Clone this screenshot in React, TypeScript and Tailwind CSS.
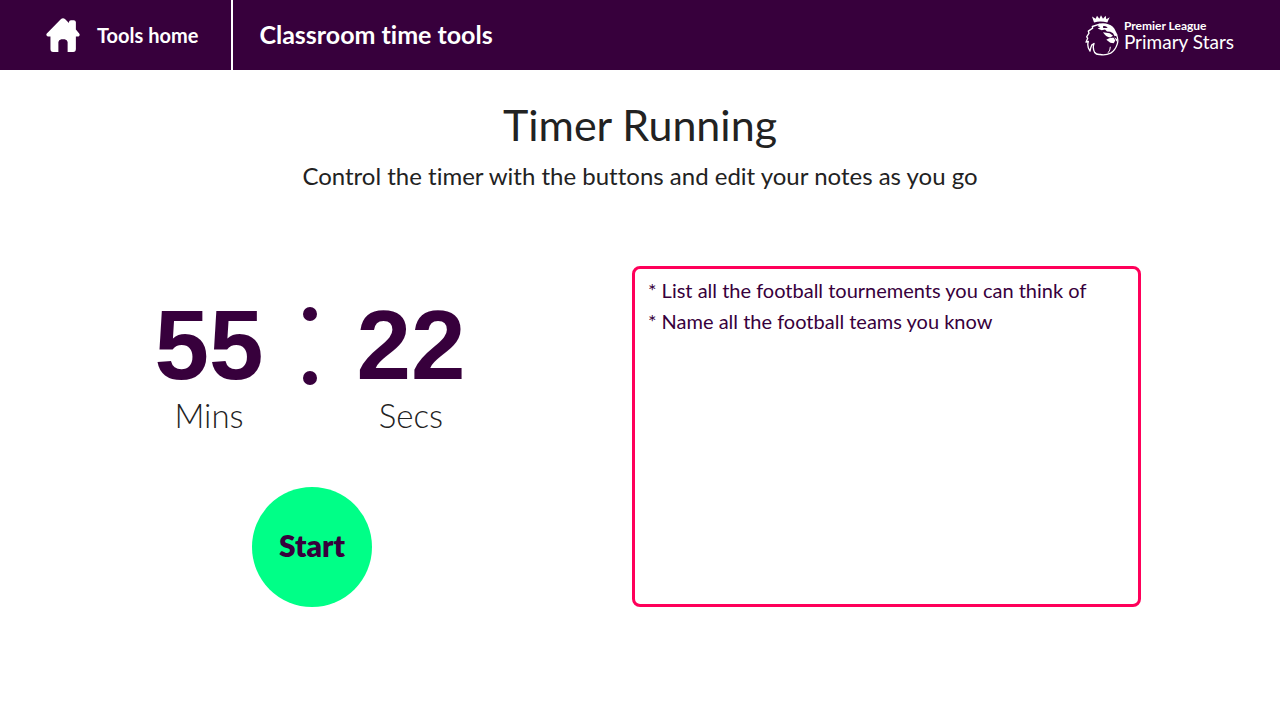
function HomeIcon() {
  return (
    <svg viewBox="0 0 102 103" className="h-[34px] w-[34px]" fill="currentColor" aria-hidden="true">
      <path d="M45 3Q51-2 57 3L69 15V12Q70 7 75 7H84Q89 7 90 12V35L100 47Q104 52 98 56H90V94Q90 103 82 103H65V73Q64 65 56 64H46Q38 65 37 73V103H21Q13 103 13 94V56H5Q-2 52 2 47Z" />
    </svg>
  );
}

function LionCrest() {
  return (
    <svg viewBox="0 0 105 122" className="h-[41px] w-[35px]" fill="none" stroke="currentColor" strokeWidth="4" strokeLinejoin="round" strokeLinecap="round" aria-hidden="true">
      <path d="M27 22L21 4L32 11L36 2L43 11L48 0L54 11L62 2L64 12L74 6L67 22Q46 16 27 22Z" fill="currentColor" stroke="none" />
      <path d="M44 27L22 34L23 39L10 48L12 54L5 65L8 69L3 81L10 79Q5 94 15 108Q16 99 20 90L27 85Q22 99 29 112Q34 119 45 118Q62 121 77 114Q91 105 97 86Q101 72 94 58" />
      <path d="M44 25Q58 22 70 27Q86 32 92 48L98 60L89 63L84 54L76 50L66 49L60 43L50 45L38 40L46 36L38 33Z" fill="currentColor" stroke="none" />
      <path d="M54 33Q62 31 68 37Q62 40 54 38Z" fill="#37003c" stroke="none" />
      <path d="M54 51L74 54L84 62L76 67Q62 65 54 51Z" fill="currentColor" stroke="none" />
      <path d="M64 74Q74 66 86 68L91 76L86 84L76 83Z" fill="currentColor" stroke="none" />
      <path d="M88 66L97 72L95 80Z" fill="currentColor" stroke="none" />
      <path d="M76 96Q76 106 70 112" strokeWidth="3" />
    </svg>
  );
}

function TimeUnit({ value, label }: { value: string; label: string }) {
  return (
    <div className="flex w-[110px] flex-col items-center">
      <span className="font-['Liberation_Sans',sans-serif] text-[98px] leading-[108px] font-bold text-[#37003c]">{value}</span>
      <span className="text-[33px] leading-8 font-light">{label}</span>
    </div>
  );
}

const notes = "* List all the football tournements you can think of\n* Name all the football teams you know";

export default function App() {
  return (
    <div className="min-h-screen bg-white font-['Lato',sans-serif] text-[#222222] [font-variant-ligatures:none]">
      <header className="flex h-[70px] items-stretch bg-[#37003c] text-white">
        <a href="#home" className="flex items-center gap-[17px] border-r-2 border-white pr-[33px] pl-[46px] text-[20px] font-bold">
          <HomeIcon />
          <span>Tools home</span>
        </a>
        <p className="flex items-center pl-[26px] text-[25px] font-bold">Classroom time tools</p>
        <a href="#primary-stars" className="mr-[46px] ml-auto flex items-center gap-1">
          <LionCrest />
          <span className="flex flex-col pt-px">
            <span className="text-[12px] leading-3 font-bold">Premier League</span>
            <span className="text-[19px] leading-5">Primary Stars</span>
          </span>
        </a>
      </header>
      <main className="px-[139px] pt-8">
        <div className="text-center">
          <h1 className="text-[43px] leading-[46px] font-normal">Timer Running</h1>
          <p className="mt-2 text-[24px] leading-[40px]">Control the timer with the buttons and edit your notes as you go</p>
        </div>
        <div className="mt-[70px] flex justify-between">
          <section className="flex w-[346px] flex-col items-center pt-[25px]" aria-label="Timer">
            <div className="flex items-start justify-center gap-[39px] pr-1">
              <TimeUnit value="55" label="Mins" />
              <div className="flex h-[94px] flex-col justify-between pt-4" aria-hidden="true">
                <span className="size-[14px] rounded-full bg-[#37003c]" />
                <span className="size-[14px] rounded-full bg-[#37003c]" />
              </div>
              <TimeUnit value="22" label="Secs" />
            </div>
            <button type="button" className="mt-14 size-[120px] rounded-full bg-[#00ff87] pb-1 text-[30px] font-extrabold text-[#37003c]">
              Start
            </button>
          </section>
          <textarea
            aria-label="Notes"
            defaultValue={notes}
            className="h-[341px] w-[509px] resize-none rounded-lg border-3 border-[#ff005a] px-[13px] py-[6px] text-[20px] leading-[31px] text-[#37003c] outline-none"
          />
        </div>
      </main>
    </div>
  );
}
